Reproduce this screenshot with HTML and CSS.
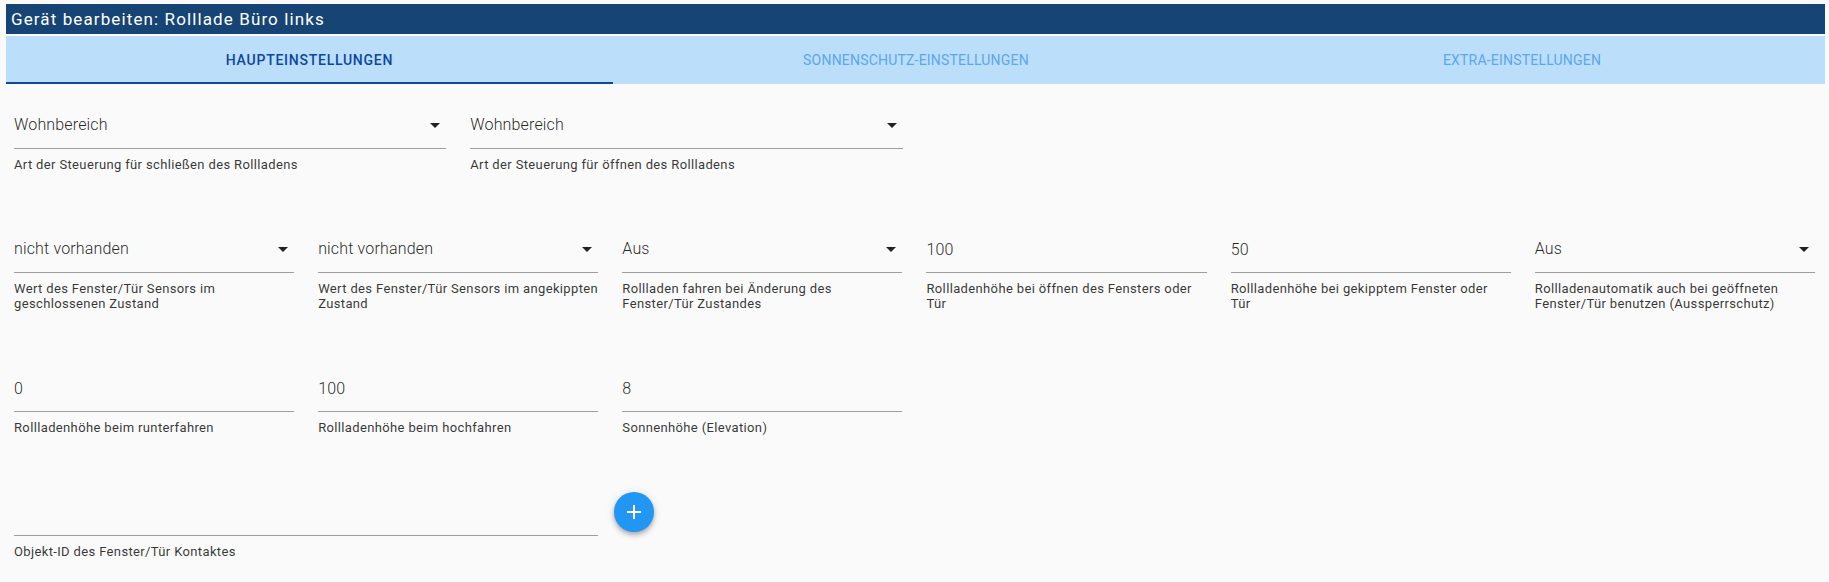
FILE: index.html
```html
<!DOCTYPE html>
<html lang="de">
<head>
<meta charset="utf-8">
<title>Gerät bearbeiten</title>
<link rel="stylesheet" href="styles.css">
</head>
<body>
<header class="title">Gerät bearbeiten: Rolllade Büro links</header>
<nav class="tabs">
  <div class="tab active">Haupteinstellungen</div>
  <div class="tab">Sonnenschutz-Einstellungen</div>
  <div class="tab">Extra-Einstellungen</div>
</nav>
<main class="content">
  <div class="row">
    <div class="field quarter">
      <div class="control select"><span class="value">Wohnbereich</span><svg class="arrow" viewBox="0 0 10 5"><path d="M0 0h10L5 5z"/></svg></div>
      <div class="helper">Art der Steuerung für schließen des Rollladens</div>
    </div>
    <div class="field quarter">
      <div class="control select"><span class="value">Wohnbereich</span><svg class="arrow" viewBox="0 0 10 5"><path d="M0 0h10L5 5z"/></svg></div>
      <div class="helper">Art der Steuerung für öffnen des Rollladens</div>
    </div>
  </div>
  <div class="row">
    <div class="field sixth">
      <div class="control select"><span class="value">nicht vorhanden</span><svg class="arrow" viewBox="0 0 10 5"><path d="M0 0h10L5 5z"/></svg></div>
      <div class="helper">Wert des Fenster/Tür Sensors im geschlossenen Zustand</div>
    </div>
    <div class="field sixth">
      <div class="control select"><span class="value">nicht vorhanden</span><svg class="arrow" viewBox="0 0 10 5"><path d="M0 0h10L5 5z"/></svg></div>
      <div class="helper">Wert des Fenster/Tür Sensors im angekippten Zustand</div>
    </div>
    <div class="field sixth">
      <div class="control select"><span class="value">Aus</span><svg class="arrow" viewBox="0 0 10 5"><path d="M0 0h10L5 5z"/></svg></div>
      <div class="helper">Rollladen fahren bei Änderung des Fenster/Tür Zustandes</div>
    </div>
    <div class="field sixth">
      <div class="control"><span class="value">100</span></div>
      <div class="helper">Rollladenhöhe bei öffnen des Fensters oder Tür</div>
    </div>
    <div class="field sixth">
      <div class="control"><span class="value">50</span></div>
      <div class="helper">Rollladenhöhe bei gekipptem Fenster oder Tür</div>
    </div>
    <div class="field sixth">
      <div class="control select"><span class="value">Aus</span><svg class="arrow" viewBox="0 0 10 5"><path d="M0 0h10L5 5z"/></svg></div>
      <div class="helper">Rollladenautomatik auch bei geöffneten Fenster/Tür benutzen (Aussperrschutz)</div>
    </div>
  </div>
  <div class="row">
    <div class="field sixth">
      <div class="control"><span class="value">0</span></div>
      <div class="helper">Rollladenhöhe beim runterfahren</div>
    </div>
    <div class="field sixth">
      <div class="control"><span class="value">100</span></div>
      <div class="helper">Rollladenhöhe beim hochfahren</div>
    </div>
    <div class="field sixth">
      <div class="control"><span class="value">8</span></div>
      <div class="helper">Sonnenhöhe (Elevation)</div>
    </div>
  </div>
  <div class="row">
    <div class="field third">
      <div class="control"></div>
      <div class="helper">Objekt-ID des Fenster/Tür Kontaktes</div>
    </div>
    <button class="fab" type="button" aria-label="Hinzufügen"><svg viewBox="0 0 24 24"><path d="M19 13h-6v6h-2v-6H5v-2h6V5h2v6h6v2z"/></svg></button>
  </div>
</main>
</body>
</html>
```
FILE: styles.css
```css
html, body {
  margin: 0;
  height: 100%;
  overflow: hidden;
  background: #fafafa;
  font-family: Roboto, sans-serif;
}
.title {
  margin: 4px 4px 2px 6px;
  height: 30px;
  line-height: 30px;
  padding-left: 5px;
  background: #164475;
  color: #fff;
  font-size: 17px;
  letter-spacing: 1.11px;
}
.tabs {
  display: grid;
  grid-template-columns: 607px 1fr 1fr;
  height: 48px;
  margin: 0 4px 0 6px;
  background: #bbdefb;
}
.tab {
  box-sizing: border-box;
  display: flex;
  align-items: center;
  justify-content: center;
  font-size: 14px;
  letter-spacing: 0.2px;
  text-transform: uppercase;
  color: #5ba6ee;
}
.tab.active {
  color: #0d47a1;
  font-weight: 500;
  letter-spacing: 0.75px;
  border-bottom: 2px solid #0d47a1;
  padding-top: 2px;
}
.content {
  padding: 16px 2px 0;
}
.row {
  display: flex;
}
.field {
  box-sizing: border-box;
  padding: 0 12px;
}
.quarter { width: 25%; }
.sixth { width: 16.6667%; }
.third { width: 33.3333%; }
.control {
  box-sizing: border-box;
  height: 49px;
  display: flex;
  align-items: flex-start;
  justify-content: space-between;
  border-bottom: 1px solid #9e9e9e;
  padding-top: 16px;
}
.control.select {
  padding-top: 15px;
}
.value {
  font-size: 16px;
  font-weight: 300;
  line-height: 20px;
  letter-spacing: 0.16px;
  color: rgba(0, 0, 0, 0.87);
}
.arrow {
  width: 10px;
  height: 5px;
  margin: 8px 6px 0 0;
  fill: rgba(0, 0, 0, 0.87);
}
.helper {
  margin: 8px 0 52px;
  font-size: 13px;
  line-height: 15px;
  letter-spacing: 0.36px;
  color: rgba(0, 0, 0, 0.8);
}
.fab {
  width: 40px;
  height: 40px;
  margin: 5px 0 0 4px;
  padding: 8px;
  border: 0;
  border-radius: 50%;
  background: #2196f3;
  box-shadow: 0 2px 4px -1px rgba(0,0,0,.2), 0 4px 5px 0 rgba(0,0,0,.14), 0 1px 10px 0 rgba(0,0,0,.12);
}
.fab svg {
  display: block;
  width: 24px;
  height: 24px;
  fill: #fff;
}
```
